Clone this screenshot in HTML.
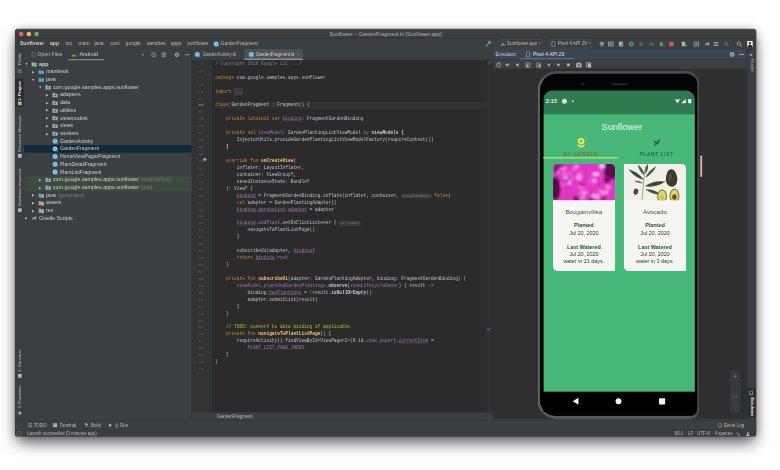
<!DOCTYPE html>
<html><head><meta charset="utf-8"><title>Sunflower – GardenFragment.kt</title>
<style>
*{box-sizing:border-box;margin:0;padding:0}
html,body{width:780px;height:470px;overflow:hidden;background:#fff}
body{font-family:"Liberation Sans",sans-serif;position:relative}
#win{position:absolute;left:15.3px;top:29.2px;width:1923px;height:1057px;transform:scale(0.3854);transform-origin:0 0;background:#3c3f41;border-radius:7px;box-shadow:0 20px 40px -5px rgba(0,0,0,.64),0 0 22px rgba(0,0,0,.2);color:#bbbbbb;font-size:13.6px;overflow:visible}
#clip{position:absolute;left:0;top:0;width:1923px;height:1057.5px;border-radius:7px;overflow:hidden}
#blur{position:absolute;left:0;top:0;width:1923px;height:1057.5px;filter:blur(1.1px)}
#in{position:absolute;left:0;top:1.5px;width:1923px;height:1056px}
.abs{position:absolute}
/* title */
#title{position:absolute;left:0;top:-1.5px;width:1923px;height:24.5px;padding-top:1.5px;box-shadow:inset 0 1.5px 0 #505254;background:linear-gradient(#3f4143,#393b3d);border-bottom:1px solid #303234;text-align:center;line-height:22px;font-size:13.6px;color:#b4b4b4}
.tl{position:absolute;top:6.5px;width:12px;height:12px;border-radius:50%}
/* nav */
#nav{position:absolute;left:0;top:23px;width:1923px;height:27px;background:#3c3f41;border-bottom:1px solid #38393b}
#nav .bc{position:absolute;top:-1px;line-height:27px;font-size:13px;color:#bbbbbb;white-space:nowrap}
#nav .bc.bd{font-weight:bold;color:#d0d0d0}
/* left strip */
#lstrip{position:absolute;left:0;top:50px;width:23.5px;height:964px;background:#3c3f41;border-right:1px solid #323232}
.vl{position:absolute;left:1.5px;width:21px;writing-mode:vertical-rl;transform:rotate(180deg);font-size:11.2px;line-height:21px;color:#bbbbbb;white-space:nowrap;text-align:left}
.vr{position:absolute;left:1.5px;width:21px;writing-mode:vertical-rl;font-size:11.2px;line-height:21px;color:#bbbbbb;white-space:nowrap}
/* project */
#proj{position:absolute;left:23.5px;top:50px;width:434.5px;height:964px;background:#3c3f41}
#proj .hd{position:absolute;left:0;top:0;width:436px;height:29px}
.tr{position:relative;height:20px;line-height:20px;font-size:13.8px;color:#cdcfd1;white-space:nowrap}
.tr.sel{background:#0d293e}
.tr.kt{font-size:13.3px}
.tr.tst{background:#3d4b40}
.tr .ar{position:absolute;top:0;font-size:9px;color:#c4c4c4;width:10px;text-align:center}
.tr .tic{position:absolute;top:2px;width:16px;height:16px}
.tr .tt{position:absolute;top:0}
.tr b{color:#d6d6d6}
.ti{width:16px;height:16px;display:block}
.gr{color:#787878}
/* editor */
#ed{position:absolute;left:459px;top:50px;width:781px;height:964px;background:#2b2b2b}
#tabs{position:absolute;left:0;top:0;width:782px;height:29px;background:#3c3f41;border-bottom:1px solid #323232}
#gut{position:absolute;left:0;top:29px;width:52px;height:913px;background:#313335;border-right:1px solid #3a3a3a}
.num{height:18px;line-height:18px;font-family:"Liberation Mono",monospace;font-size:10.5px;color:#606366;text-align:right;padding-right:22px}
.num.cur{color:#a4a3a3}
#code{position:absolute;left:60.5px;top:29px;width:708px;height:913px;overflow:hidden;font-family:"Liberation Mono",monospace;font-size:11.67px;color:#b7c2cc}
.ln{height:18px;line-height:18px;white-space:pre}
.ln.cur{background:#323232;margin-left:-6px;padding-left:6px}
.k{color:#d08234}.f{color:#ffc66d;font-weight:bold}.c{color:#808080}.p{color:#9876aa}.t{color:#a8c023}
.b{font-weight:bold;color:#c5d0da}.i{font-style:italic}.u{text-decoration:underline}
.h{color:#787878;background:#3b3b3b;font-size:9.6px;border-radius:3px;padding:1px 2px}
.fold{background:#3a3a3a;color:#808080;border:1px solid #555}
#edbc{position:absolute;left:0;top:942px;width:782px;height:22px;background:#3c3f41;border-top:1px solid #323232;font-size:12.2px;line-height:22px;color:#bbbbbb}
/* emulator */
#emu{position:absolute;left:1240px;top:50px;width:659px;height:960.5px;background:#2d2f31;border-left:1px solid #323232}
#emuhd{position:absolute;left:0;top:0;width:659px;height:27px;background:#3a4653}
#emutb{position:absolute;left:0;top:27px;width:659px;height:25px;background:#3c3f41;border-bottom:1px solid #323232}
/* right strip */
#rstrip{position:absolute;left:1899px;top:50px;width:24px;height:964px;background:#3c3f41;border-left:1px solid #323232}
/* bottom */
#bstrip{position:absolute;left:0;top:1014px;width:1923px;height:23px;background:#3c3f41;border-top:1px solid #323232;font-size:11.5px;line-height:24px}
#status{position:absolute;left:0;top:1037px;width:1923px;height:19px;background:#3a3d3f;border-top:1px solid #353739;font-size:11.6px;line-height:18px}
.bi{position:absolute;top:0;white-space:nowrap;color:#bbbbbb}
/* phone */
#phone{position:absolute;left:1355.5px;top:107.5px;width:420px;height:902.5px;background:#030404;border-radius:50px 34px 24px 48px;border-style:solid;border-color:#4a4c4f #40464a #55575a #606264;border-width:7px 6px 8px 6px}
#screen{position:absolute;left:1371.3px;top:157px;width:392.6px;height:834px;background:#000;border-radius:24px 24px 0 0;overflow:hidden;font-family:"Liberation Sans",sans-serif}
#sb{position:absolute;left:0;top:0;width:395px;height:62px;background:#2f7a4f}
#app{position:absolute;left:0;top:62px;width:395px;height:720.5px;background:#48b878}
#appin{position:absolute;left:-2.3px;top:2px;width:395px;height:718px}
.card{position:absolute;top:127px;width:161px;height:278px;background:#f5f6f2;border-radius:3px 12px 3px 12px;overflow:hidden;text-align:center;color:#3c3c3c}
.card .img{position:absolute;left:0;top:0;width:161px;height:95px;overflow:hidden}
.card .nm{position:absolute;left:0;width:161px;top:115px;font-size:16px;line-height:20px;color:#505050}
.card .lb{position:absolute;left:0;width:161px;font-size:14px;line-height:18px;font-weight:bold;color:#1f5a3a}
.card .vl2{position:absolute;left:0;width:161px;font-size:14px;line-height:18px;color:#383838}
</style></head>
<body>
<div id="win"><div id="clip"><div id="blur"><div id="in">
<!-- title bar -->
<div id="title">Sunflower – GardenFragment.kt [Sunflower.app]
<span class="tl" style="left:9.5px;background:#e0675d"></span><span class="tl" style="left:29.5px;background:#ecbd52"></span><span class="tl" style="left:49.5px;background:#5bb85a"></span>
</div>
<!-- nav bar -->
<div id="nav">
<span class="bc bd" style="left:13px">Sunflower</span>
<span class="bc bd" style="left:91px">app</span>
<span class="bc" style="left:131px">src</span>
<span class="bc" style="left:165px">main</span>
<span class="bc" style="left:206px">java</span>
<span class="bc" style="left:247px">com</span>
<span class="bc" style="left:287px">google</span>
<span class="bc" style="left:342px">samples</span>
<span class="bc" style="left:404px">apps</span>
<span class="bc" style="left:447px">sunflower</span>
<svg class="abs" style="left:513.5px;top:6px;width:16px;height:16px" viewBox="0 0 16 16"><circle cx="8" cy="8" r="7" fill="#4f9fc6"/><circle cx="8" cy="8" r="3.8" fill="none" stroke="#e4f2f9" stroke-width="1.7"/><path d="M16 16h-4l4-4z" fill="#c98a5a"/></svg>
<span class="bc" style="left:533.5px;font-size:12.7px">GardenFragment</span>
<!-- run toolbar -->
<svg class="abs" style="left:1220px;top:5px;width:17px;height:17px" viewBox="0 0 16 16"><path d="M1 13l7-7-1-3 4-3 1 3 3 1-3 4-3-1-6 8z" fill="#5fae6e" stroke="#5fae6e" stroke-width="1"/></svg>
<div class="abs" style="left:1254px;top:2px;width:116px;height:23px;border:1px solid #5a5d5f;border-radius:3px;background:#3c3f41"></div>
<svg class="abs" style="left:1259px;top:7px;width:14px;height:14px" viewBox="0 0 16 16"><path d="M2 12a6 6 0 0 1 12 0z" fill="#62b543"/></svg>
<span class="bc" style="left:1276px;font-size:12.5px">Sunflower.app</span>
<span class="bc" style="left:1358px;font-size:8px;color:#9a9a9a">&#9660;</span>
<div class="abs" style="left:1386px;top:2px;width:110px;height:23px;border:1px solid #5a5d5f;border-radius:3px;background:#3c3f41"></div>
<svg class="abs" style="left:1390px;top:6px;width:14px;height:16px" viewBox="0 0 14 16"><rect x="3" y="1" width="8" height="14" rx="1.5" fill="none" stroke="#afb1b3" stroke-width="1.5"/></svg>
<span class="bc" style="left:1408px;font-size:12.2px">Pixel 4 API 29</span>
<span class="bc" style="left:1486px;font-size:8px;color:#9a9a9a">&#9660;</span>
<svg class="abs" style="left:1514px;top:6px;width:16px;height:16px" viewBox="0 0 16 16"><path d="M3 8a5 5 0 0 1 9-3l1.5-1.5V8H9l1.7-1.7A3.2 3.2 0 0 0 5 8zM13 9a5 5 0 0 1-9 2" fill="none" stroke="#afb1b3" stroke-width="1.8"/><rect x="6" y="6" width="4" height="4" fill="#afb1b3"/></svg><svg class="abs" style="left:1538px;top:6px;width:16px;height:16px" viewBox="0 0 16 16"><rect x="2" y="3" width="12" height="10" fill="none" stroke="#afb1b3" stroke-width="1.8"/><path d="M2 8h12M8 3v10" stroke="#afb1b3" stroke-width="1.4"/></svg><svg class="abs" style="left:1564px;top:6px;width:16px;height:16px" viewBox="0 0 16 16"><rect x="3" y="2" width="10" height="12" fill="#afb1b3"/><rect x="8" y="8" width="7" height="7" fill="#6e7f8a"/></svg><svg class="abs" style="left:1591px;top:6px;width:16px;height:16px" viewBox="0 0 16 16"><circle cx="8" cy="8" r="6.5" fill="#4f9e62"/><path d="M6 4.5v7l6-3.5z" fill="#3c3f41"/></svg><svg class="abs" style="left:1617px;top:6px;width:16px;height:16px" viewBox="0 0 16 16"><ellipse cx="8" cy="9" rx="4.5" ry="5.5" fill="#4a6b52"/><path d="M2 5l3 2M14 5l-3 2M1 10h3M15 10h-3" stroke="#4a6b52" stroke-width="1.5"/></svg><svg class="abs" style="left:1643px;top:6px;width:16px;height:16px" viewBox="0 0 16 16"><path d="M2 12a6 6 0 0 1 12 0" fill="none" stroke="#7d8184" stroke-width="2"/><path d="M8 12l4-5" stroke="#7d8184" stroke-width="2"/></svg><svg class="abs" style="left:1670px;top:6px;width:16px;height:16px" viewBox="0 0 16 16"><ellipse cx="7" cy="8" rx="4.5" ry="5.5" fill="#4f9e62"/><path d="M9 9l6 6v-4h-4z" fill="#afb1b3"/></svg><svg class="abs" style="left:1695px;top:6px;width:16px;height:16px" viewBox="0 0 16 16"><rect x="2" y="2" width="12" height="12" rx="2" fill="#d6544f"/></svg><svg class="abs" style="left:1728px;top:6px;width:16px;height:16px" viewBox="0 0 16 16"><rect x="2" y="2" width="9" height="12" rx="1" fill="#afb1b3"/><path d="M7 14a4.5 4.5 0 0 1 9 0z" fill="#62b543"/></svg><svg class="abs" style="left:1760px;top:6px;width:16px;height:16px" viewBox="0 0 16 16"><rect x="2" y="3" width="12" height="10" fill="none" stroke="#afb1b3" stroke-width="1.8"/><path d="M8 5v5M5.5 8L8 10.5 10.5 8" stroke="#afb1b3" stroke-width="1.6" fill="none"/></svg><svg class="abs" style="left:1789px;top:6px;width:16px;height:16px" viewBox="0 0 16 16"><path d="M1 12c0-5 4-8 8-7l3-2 1 2-2 2c1 2 1 4 0 5h-2c0-2-1-3-3-3s-3 1-3 3z" fill="#8fb0c4"/></svg><svg class="abs" style="left:1811px;top:6px;width:16px;height:16px" viewBox="0 0 16 16"><path d="M2 4h12M2 8h12M2 12h12" stroke="#afb1b3" stroke-width="2"/></svg><svg class="abs" style="left:1838px;top:6px;width:16px;height:16px" viewBox="0 0 16 16"><circle cx="6.5" cy="6.5" r="4" fill="none" stroke="#8a8d90" stroke-width="1.8"/><path d="M9.5 9.5L14 14" stroke="#8a8d90" stroke-width="2"/></svg><svg class="abs" style="left:1871px;top:6px;width:16px;height:16px" viewBox="0 0 16 16"><circle cx="7" cy="7" r="4.5" fill="none" stroke="#c0c2c4" stroke-width="1.8"/><path d="M10.2 10.2L15 15" stroke="#c0c2c4" stroke-width="2"/></svg><svg class="abs" style="left:1899px;top:6px;width:16px;height:16px" viewBox="0 0 16 16"><rect x="1" y="0" width="14" height="16" rx="1" fill="#f4f4f4"/><circle cx="8" cy="6" r="3" fill="#222"/><path d="M2 16a6 6 0 0 1 12 0z" fill="#222"/></svg>
</div>
<!-- left strip -->
<div id="lstrip">
<div class="abs" style="left:0;top:77px;width:23px;height:73px;background:#2d2f30"></div>
<div class="vl" style="top:10px;height:32px;">Profile</div>
<svg class="abs" style="left:6.5px;top:52px;width:11px;height:11px" viewBox="0 0 12 12"><path d="M0 2h12M0 6h12M0 10h12" stroke="#9a9da0" stroke-width="1.6"/></svg>
<div class="vl" style="top:83px;height:52px;color:#f0f0f0;font-weight:bold">1: Project</div>
<svg class="abs" style="left:6.5px;top:136px;width:11px;height:11px" viewBox="0 0 12 12"><rect x="1" y="1" width="10" height="10" fill="#afb1b3"/><rect x="1" y="1" width="10" height="3" fill="#d0d2d4"/></svg>
<div class="vl" style="top:172px;height:95px;">Resource Manager</div>
<svg class="abs" style="left:6.5px;top:272px;width:11px;height:11px" viewBox="0 0 12 12"><rect x="1" y="1" width="10" height="10" fill="#afb1b3"/><rect x="1" y="1" width="10" height="3" fill="#d0d2d4"/></svg>
<div class="vl" style="top:310px;height:97px;">Database Inspector</div>
<svg class="abs" style="left:6.5px;top:413px;width:11px;height:11px" viewBox="0 0 12 12"><rect x="1" y="1" width="10" height="10" fill="#afb1b3"/><rect x="1" y="1" width="10" height="3" fill="#d0d2d4"/></svg>
<div class="vl" style="top:769px;height:69px;">2: Structure</div>
<svg class="abs" style="left:6.5px;top:843px;width:11px;height:11px" viewBox="0 0 12 12"><rect x="1" y="1" width="10" height="10" fill="#afb1b3"/><rect x="1" y="1" width="10" height="3" fill="#d0d2d4"/></svg>
<div class="vl" style="top:875px;height:57px;">2: Favorites</div>
<svg class="abs" style="left:6.5px;top:939px;width:11px;height:11px" viewBox="0 0 12 12"><path d="M6 0l1.8 4 4.2.4-3.2 2.9 1 4.3L6 9.4 2.2 11.6l1-4.3L0 4.4 4.2 4z" fill="#afb1b3"/></svg>
</div>
<!-- project panel -->
<div id="proj">
<div class="hd">
<svg class="abs" style="left:18px;top:8px;width:12px;height:14px" viewBox="0 0 14 16"><path d="M2 1h7l3 3v11H2z" fill="none" stroke="#9a9da0" stroke-width="1.4"/></svg>
<span class="abs" style="left:35px;top:0;line-height:29px;font-size:13.3px;color:#bbbbbb">Open Files</span>
<svg class="abs" style="left:122px;top:10px;width:13px;height:11px" viewBox="0 0 16 14"><path d="M1 12a7 7 0 0 1 14 0z" fill="#62b543"/></svg>
<span class="abs" style="left:144px;top:0;line-height:29px;font-size:13.8px;color:#d0d0d0">Android</span>
<div class="abs" style="left:114px;top:26px;width:93px;height:3px;background:#8a8d90"></div>
<span class="abs" style="left:304px;top:0;line-height:29px;font-size:9px;color:#9a9a9a">&#9660;</span>
<svg class="abs" style="left:328px;top:7px;width:16px;height:16px" viewBox="0 0 16 16"><circle cx="8" cy="8" r="5.5" fill="none" stroke="#afb1b3" stroke-width="1.5"/><circle cx="8" cy="8" r="1.6" fill="#afb1b3"/></svg>
<svg class="abs" style="left:354px;top:7px;width:16px;height:16px" viewBox="0 0 16 16"><path d="M2 4h12M2 8h12M2 12h12" stroke="#afb1b3" stroke-width="1.5"/><path d="M8 1v14" stroke="#afb1b3" stroke-width="1.5"/></svg>
<svg class="abs" style="left:388px;top:7px;width:16px;height:16px" viewBox="0 0 16 16"><circle cx="8" cy="8" r="4.5" fill="none" stroke="#afb1b3" stroke-width="3" stroke-dasharray="2.4 1.1"/><circle cx="8" cy="8" r="3.2" fill="none" stroke="#afb1b3" stroke-width="1.6"/></svg>
<div class="abs" style="left:417px;top:14px;width:12px;height:2px;background:#afb1b3"></div>
</div>
<div class="abs" style="left:0;top:29.4px;width:434.5px">
<div class="tr "><span class="ar" style="left:1px">&#9660;</span><span class="tic" style="left:18px"><svg class="ti" viewBox="0 0 16 16"><path d="M1 3h5l2 2h7v9H1z" fill="#9aa7b0"/><circle cx="11.5" cy="11.5" r="3.5" fill="#62b543"/></svg></span><span class="tt" style="left:39px"><b>app</b></span></div>
<div class="tr "><span class="ar" style="left:20px">&#9654;</span><span class="tic" style="left:36px"><svg class="ti" viewBox="0 0 16 16"><path d="M1 3h5l2 2h7v9H1z" fill="#3e86a0"/><path d="M1 6h14v8H1z" fill="#4fa3c4"/></svg></span><span class="tt" style="left:57px">manifests</span></div>
<div class="tr "><span class="ar" style="left:19px">&#9660;</span><span class="tic" style="left:36px"><svg class="ti" viewBox="0 0 16 16"><path d="M1 3h5l2 2h7v9H1z" fill="#3e86a0"/><path d="M1 6h14v8H1z" fill="#4fa3c4"/></svg></span><span class="tt" style="left:57px">java</span></div>
<div class="tr "><span class="ar" style="left:37px">&#9660;</span><span class="tic" style="left:54px"><svg class="ti" viewBox="0 0 16 16"><path d="M1 3h5l2 2h7v9H1z" fill="#9aa7b0"/><circle cx="8" cy="9.5" r="2" fill="#3c3f41"/></svg></span><span class="tt" style="left:75px">com.google.samples.apps.sunflower</span></div>
<div class="tr "><span class="ar" style="left:56px">&#9654;</span><span class="tic" style="left:72px"><svg class="ti" viewBox="0 0 16 16"><path d="M1 3h5l2 2h7v9H1z" fill="#9aa7b0"/><circle cx="8" cy="9.5" r="2" fill="#3c3f41"/></svg></span><span class="tt" style="left:93px">adapters</span></div>
<div class="tr "><span class="ar" style="left:56px">&#9654;</span><span class="tic" style="left:72px"><svg class="ti" viewBox="0 0 16 16"><path d="M1 3h5l2 2h7v9H1z" fill="#9aa7b0"/><circle cx="8" cy="9.5" r="2" fill="#3c3f41"/></svg></span><span class="tt" style="left:93px">data</span></div>
<div class="tr "><span class="ar" style="left:56px">&#9654;</span><span class="tic" style="left:72px"><svg class="ti" viewBox="0 0 16 16"><path d="M1 3h5l2 2h7v9H1z" fill="#9aa7b0"/><circle cx="8" cy="9.5" r="2" fill="#3c3f41"/></svg></span><span class="tt" style="left:93px">utilities</span></div>
<div class="tr "><span class="ar" style="left:56px">&#9654;</span><span class="tic" style="left:72px"><svg class="ti" viewBox="0 0 16 16"><path d="M1 3h5l2 2h7v9H1z" fill="#9aa7b0"/><circle cx="8" cy="9.5" r="2" fill="#3c3f41"/></svg></span><span class="tt" style="left:93px">viewmodels</span></div>
<div class="tr "><span class="ar" style="left:56px">&#9654;</span><span class="tic" style="left:72px"><svg class="ti" viewBox="0 0 16 16"><path d="M1 3h5l2 2h7v9H1z" fill="#9aa7b0"/><circle cx="8" cy="9.5" r="2" fill="#3c3f41"/></svg></span><span class="tt" style="left:93px">views</span></div>
<div class="tr "><span class="ar" style="left:56px">&#9654;</span><span class="tic" style="left:72px"><svg class="ti" viewBox="0 0 16 16"><path d="M1 3h5l2 2h7v9H1z" fill="#9aa7b0"/><circle cx="8" cy="9.5" r="2" fill="#3c3f41"/></svg></span><span class="tt" style="left:93px">workers</span></div>
<div class="tr kt"><span class="tic" style="left:72px"><svg class="ti" viewBox="0 0 16 16"><circle cx="8" cy="8" r="7" fill="#4f9fc6"/><circle cx="8" cy="8" r="3.8" fill="none" stroke="#e4f2f9" stroke-width="1.7"/><path d="M16 16h-4l4-4z" fill="#c98a5a"/></svg></span><span class="tt" style="left:93px">GardenActivity</span></div>
<div class="tr sel kt"><span class="tic" style="left:72px"><svg class="ti" viewBox="0 0 16 16"><circle cx="8" cy="8" r="7" fill="#4f9fc6"/><circle cx="8" cy="8" r="3.8" fill="none" stroke="#e4f2f9" stroke-width="1.7"/><path d="M16 16h-4l4-4z" fill="#c98a5a"/></svg></span><span class="tt" style="left:93px">GardenFragment</span></div>
<div class="tr kt"><span class="tic" style="left:72px"><svg class="ti" viewBox="0 0 16 16"><circle cx="8" cy="8" r="7" fill="#4f9fc6"/><circle cx="8" cy="8" r="3.8" fill="none" stroke="#e4f2f9" stroke-width="1.7"/><path d="M16 16h-4l4-4z" fill="#c98a5a"/></svg></span><span class="tt" style="left:93px">HomeViewPagerFragment</span></div>
<div class="tr kt"><span class="tic" style="left:72px"><svg class="ti" viewBox="0 0 16 16"><circle cx="8" cy="8" r="7" fill="#4f9fc6"/><circle cx="8" cy="8" r="3.8" fill="none" stroke="#e4f2f9" stroke-width="1.7"/><path d="M16 16h-4l4-4z" fill="#c98a5a"/></svg></span><span class="tt" style="left:93px">PlantDetailFragment</span></div>
<div class="tr kt"><span class="tic" style="left:72px"><svg class="ti" viewBox="0 0 16 16"><circle cx="8" cy="8" r="7" fill="#4f9fc6"/><circle cx="8" cy="8" r="3.8" fill="none" stroke="#e4f2f9" stroke-width="1.7"/><path d="M16 16h-4l4-4z" fill="#c98a5a"/></svg></span><span class="tt" style="left:93px">PlantListFragment</span></div>
<div class="tr tst"><span class="ar" style="left:38px">&#9654;</span><span class="tic" style="left:54px"><svg class="ti" viewBox="0 0 16 16"><path d="M1 3h5l2 2h7v9H1z" fill="#9aa7b0"/><circle cx="8" cy="9.5" r="2" fill="#3c3f41"/></svg></span><span class="tt" style="left:75px">com.google.samples.apps.sunflower <span class="gr">(androidTest)</span></span></div>
<div class="tr tst"><span class="ar" style="left:38px">&#9654;</span><span class="tic" style="left:54px"><svg class="ti" viewBox="0 0 16 16"><path d="M1 3h5l2 2h7v9H1z" fill="#9aa7b0"/><circle cx="8" cy="9.5" r="2" fill="#3c3f41"/></svg></span><span class="tt" style="left:75px">com.google.samples.apps.sunflower <span class="gr">(test)</span></span></div>
<div class="tr "><span class="ar" style="left:20px">&#9654;</span><span class="tic" style="left:36px"><svg class="ti" viewBox="0 0 16 16"><path d="M1 3h5l2 2h7v9H1z" fill="#4fa3c4"/><circle cx="11.5" cy="11.5" r="3.5" fill="#cfa35a"/></svg></span><span class="tt" style="left:57px">java <span class="gr">(generated)</span></span></div>
<div class="tr "><span class="ar" style="left:20px">&#9654;</span><span class="tic" style="left:36px"><svg class="ti" viewBox="0 0 16 16"><path d="M1 3h5l2 2h7v9H1z" fill="#9aa7b0"/><path d="M8 8h7v7H8z" fill="#cfa35a"/></svg></span><span class="tt" style="left:57px">assets</span></div>
<div class="tr "><span class="ar" style="left:20px">&#9654;</span><span class="tic" style="left:36px"><svg class="ti" viewBox="0 0 16 16"><path d="M1 3h5l2 2h7v9H1z" fill="#9aa7b0"/><path d="M8 8h7v7H8z" fill="#cfa35a"/></svg></span><span class="tt" style="left:57px">res</span></div>
<div class="tr "><span class="ar" style="left:2px">&#9654;</span><span class="tic" style="left:18px"><svg class="ti" viewBox="0 0 16 16"><path d="M2 12c0-5 4-8 8-7l3-2 1 2-2 2c1 2 1 4 0 5h-2c0-2-1-3-3-3s-3 1-3 3z" fill="#afb1b3"/></svg></span><span class="tt" style="left:39px">Gradle Scripts</span></div>

</div>
</div>
<!-- editor -->
<div id="ed">
<div id="tabs">
<svg class="abs" style="left:6px;top:6px;width:16px;height:16px" viewBox="0 0 16 16"><circle cx="8" cy="8" r="7" fill="#4f9fc6"/><circle cx="8" cy="8" r="3.8" fill="none" stroke="#e4f2f9" stroke-width="1.7"/><path d="M16 16h-4l4-4z" fill="#c98a5a"/></svg>
<span class="abs" style="left:28px;top:0;line-height:28px;font-size:11.6px;color:#bbbbbb">GardenActivity.kt</span>
<div class="abs" style="left:136px;top:0;width:152px;height:28px;background:#4e5254;border-bottom:3px solid #9da0a2"></div>
<svg class="abs" style="left:146px;top:6px;width:16px;height:16px" viewBox="0 0 16 16"><circle cx="8" cy="8" r="7" fill="#4f9fc6"/><circle cx="8" cy="8" r="3.8" fill="none" stroke="#e4f2f9" stroke-width="1.7"/><path d="M16 16h-4l4-4z" fill="#c98a5a"/></svg>
<span class="abs" style="left:166px;top:0;line-height:28px;font-size:11.6px;color:#d4d4d4">GardenFragment.kt</span>
<span class="abs" style="left:273px;top:0;line-height:27px;font-size:12px;color:#8a8a8a">×</span>
</div>
<div id="gut">
<div class="num">1</div>
<div class="num">16</div>
<div class="num">17</div>
<div class="num">18</div>
<div class="num">19</div>
<div class="num">32</div>
<div class="num cur">33</div>
<div class="num">34</div>
<div class="num">35</div>
<div class="num">36</div>
<div class="num">37</div>
<div class="num">38</div>
<div class="num">39</div>
<div class="num">40</div>
<div class="num">41</div>
<div class="num">42</div>
<div class="num">43</div>
<div class="num">44</div>
<div class="num">45</div>
<div class="num">46</div>
<div class="num">47</div>
<div class="num">48</div>
<div class="num">49</div>
<div class="num">50</div>
<div class="num">51</div>
<div class="num">52</div>
<div class="num">53</div>
<div class="num">54</div>
<div class="num">55</div>
<div class="num">56</div>
<div class="num">57</div>
<div class="num">58</div>
<div class="num">59</div>
<div class="num">60</div>
<div class="num">61</div>
<div class="num">62</div>
<div class="num">63</div>
<div class="num">64</div>
<div class="num">65</div>
<div class="num">66</div>
<div class="num">67</div>
<div class="num">68</div>
<div class="num">69</div>
<div class="num">70</div>
<div class="num">71</div>

</div>
<svg class="abs" style="left:28px;top:281px;width:11px;height:11px" viewBox="0 0 12 12"><circle cx="6" cy="6" r="5" fill="#5f8aa3"/><path d="M6 9V3.5M3.5 6L6 3.5 8.5 6" stroke="#e8eef2" stroke-width="1.4" fill="none"/></svg>
<div id="code">
<div class="ln"><span class="c">/ Copyright 2018 Google LLC .../</span></div>
<div class="ln">&nbsp;</div>
<div class="ln"><span class="k">package</span> com.google.samples.apps.sunflower</div>
<div class="ln">&nbsp;</div>
<div class="ln"><span class="k">import</span> <span class="fold">...</span></div>
<div class="ln">&nbsp;</div>
<div class="ln cur"><span class="k">class</span> GardenFragment : Fragment() {</div>
<div class="ln">&nbsp;</div>
<div class="ln">    <span class="k">private lateinit var</span> <span class="p u">binding</span>: FragmentGardenBinding</div>
<div class="ln">&nbsp;</div>
<div class="ln">    <span class="k">private val</span> <span class="p">viewModel</span>: GardenPlantingListViewModel <span class="k">by</span> <span class="b">viewModels {</span></div>
<div class="ln">        InjectorUtils.provideGardenPlantingListViewModelFactory(requireContext())</div>
<div class="ln">    <span class="b">}</span></div>
<div class="ln">&nbsp;</div>
<div class="ln">    <span class="k">override fun</span> <span class="f">onCreateView</span>(</div>
<div class="ln">        inflater: LayoutInflater,</div>
<div class="ln">        container: ViewGroup?,</div>
<div class="ln">        savedInstanceState: Bundle?</div>
<div class="ln">    ): View? {</div>
<div class="ln">        <span class="p u">binding</span> = FragmentGardenBinding.inflate(inflater, container, <span class="h">attachToRoot:</span> <span class="k">false</span>)</div>
<div class="ln">        <span class="k">val</span> adapter = GardenPlantingAdapter()</div>
<div class="ln">        <span class="p u">binding</span>.<span class="p u">gardenList</span>.<span class="p u">adapter</span> = adapter</div>
<div class="ln">&nbsp;</div>
<div class="ln">        <span class="p u">binding</span>.<span class="p">addPlant</span>.setOnClickListener { <span class="h">it: View!</span></div>
<div class="ln">            navigateToPlantListPage()</div>
<div class="ln">        }</div>
<div class="ln">&nbsp;</div>
<div class="ln">        subscribeUi(adapter, <span class="p u">binding</span>)</div>
<div class="ln">        <span class="k">return</span> <span class="p u">binding</span>.<span class="p">root</span></div>
<div class="ln">    }</div>
<div class="ln">&nbsp;</div>
<div class="ln">    <span class="k">private fun</span> <span class="f">subscribeUi</span>(adapter: GardenPlantingAdapter, binding: FragmentGardenBinding) {</div>
<div class="ln">        <span class="p">viewModel</span>.<span class="p">plantAndGardenPlantings</span>.<span class="b">observe</span>(<span class="p">viewLifecycleOwner</span>) { result -&gt;</div>
<div class="ln">            binding.<span class="p u">hasPlantings</span> = !result.<span class="b i">isNullOrEmpty</span>()</div>
<div class="ln">            adapter.submitList(result)</div>
<div class="ln">        }</div>
<div class="ln">    }</div>
<div class="ln">&nbsp;</div>
<div class="ln">    <span class="t">// TODO: convert to data binding if applicable</span></div>
<div class="ln">    <span class="k">private fun</span> <span class="f">navigateToPlantListPage</span>() {</div>
<div class="ln">        requireActivity().findViewById&lt;ViewPager2&gt;(R.id.<span class="p i">view_pager</span>).<span class="p u">currentItem</span> =</div>
<div class="ln">            <span class="p i">PLANT_LIST_PAGE_INDEX</span></div>
<div class="ln">    }</div>
<div class="ln">}</div>
<div class="ln">&nbsp;</div>

</div>
<div class="abs" style="left:765px;top:29px;width:16px;height:935px;background:#2e3032"></div><svg class="abs" style="left:766px;top:27px;width:14px;height:14px" viewBox="0 0 14 14"><path d="M2 8l3 3 7-8" stroke="#6a9b4d" stroke-width="2.4" fill="none"/></svg>
<svg class="abs" style="left:762px;top:722px;width:12px;height:10px" viewBox="0 0 12 10"><path d="M11 1v8L1 5z" fill="#4d6c7c"/></svg>
<div id="edbc"><span class="abs" style="left:65px">GardenFragment</span></div>
</div>
<!-- emulator -->
<div id="emu">
<div id="emuhd">
<span class="abs" style="left:6px;top:0;line-height:27px;font-size:13px;color:#c8ccd0">Emulator:</span>
<svg class="abs" style="left:84px;top:6px;width:12px;height:16px" viewBox="0 0 12 16"><rect x="2" y="1" width="8" height="14" rx="1.5" fill="none" stroke="#c0c4c8" stroke-width="1.4"/></svg>
<span class="abs" style="left:103px;top:0;line-height:27px;font-size:13px;color:#e0e3e6">Pixel 4 API 29</span>
<div class="abs" style="left:70px;top:24px;width:142px;height:3px;background:#4a88c7"></div>
<svg class="abs" style="left:612px;top:6px;width:16px;height:16px" viewBox="0 0 16 16"><circle cx="8" cy="8" r="4.5" fill="none" stroke="#c8ccd0" stroke-width="3" stroke-dasharray="2.4 1.1"/><circle cx="8" cy="8" r="3.2" fill="none" stroke="#c8ccd0" stroke-width="1.6"/></svg>
<div class="abs" style="left:638px;top:13px;width:12px;height:2px;background:#c8ccd0"></div>
</div>
<div id="emutb"><svg class="abs" style="left:6px;top:6px;width:16px;height:16px" viewBox="0 0 16 16"><circle cx="8" cy="8" r="5.5" fill="none" stroke="#afb1b3" stroke-width="1.8"/><path d="M8 2v6" stroke="#afb1b3" stroke-width="1.8"/></svg><svg class="abs" style="left:30px;top:6px;width:16px;height:16px" viewBox="0 0 16 16"><path d="M2 6h3l4-3v10l-4-3H2z" fill="#afb1b3"/><path d="M11 5a4 4 0 0 1 0 6" stroke="#afb1b3" stroke-width="1.5" fill="none"/></svg><svg class="abs" style="left:56px;top:6px;width:16px;height:16px" viewBox="0 0 16 16"><path d="M3 6h3l4-3v10l-4-3H3z" fill="#afb1b3"/></svg><svg class="abs" style="left:82px;top:6px;width:16px;height:16px" viewBox="0 0 16 16"><rect x="3" y="3" width="10" height="11" fill="none" stroke="#afb1b3" stroke-width="1.6"/><rect x="4" y="7" width="5" height="6" fill="#afb1b3"/></svg><svg class="abs" style="left:110px;top:6px;width:16px;height:16px" viewBox="0 0 16 16"><rect x="3" y="3" width="10" height="11" fill="none" stroke="#afb1b3" stroke-width="1.6"/><rect x="7" y="7" width="5" height="6" fill="#afb1b3"/></svg><svg class="abs" style="left:136px;top:6px;width:16px;height:16px" viewBox="0 0 16 16"><path d="M11 4v8L4 8z" fill="#afb1b3"/></svg><svg class="abs" style="left:161px;top:6px;width:16px;height:16px" viewBox="0 0 16 16"><circle cx="8" cy="8" r="3.6" fill="#afb1b3"/></svg><svg class="abs" style="left:187px;top:6px;width:16px;height:16px" viewBox="0 0 16 16"><rect x="4.5" y="4.5" width="7" height="7" fill="#afb1b3"/></svg><svg class="abs" style="left:214px;top:6px;width:16px;height:16px" viewBox="0 0 16 16"><path d="M1 4h3l1-2h6l1 2h3v10H1z" fill="#afb1b3"/><circle cx="8" cy="9" r="2.6" fill="#3c3f41"/></svg><svg class="abs" style="left:240px;top:6px;width:16px;height:16px" viewBox="0 0 16 16"><rect x="2" y="1" width="9" height="11" fill="none" stroke="#afb1b3" stroke-width="1.5"/><rect x="5" y="4" width="9" height="11" fill="#afb1b3"/></svg></div>
</div>
<!-- phone (window coords) -->
<div id="phone"></div>
<div class="abs" style="left:1778px;top:326px;width:5px;height:56px;background:#e8a79a;border-radius:2px"></div>
<div class="abs" style="left:1548px;top:139px;width:42px;height:5px;border-radius:3px;background:#222426"></div><div class="abs" style="left:1468px;top:136px;width:11px;height:11px;border-radius:50%;background:#16181a"></div>
<div id="screen">
<div id="sb">
<span class="abs" style="left:6px;top:20px;font-size:14.5px;line-height:16px;color:#e8f3ec;font-weight:bold">2:15</span>
<span class="abs" style="left:48px;top:22px;width:13px;height:13px;border-radius:50%;background:#d5e8dc"></span>
<span class="abs" style="left:74px;top:26px;width:5px;height:5px;border-radius:50%;background:#d5e8dc"></span>
<svg class="abs" style="left:341px;top:21.5px;width:46px;height:14.4px" viewBox="0 0 48 15"><path d="M0.5 3h13.6l-6.8 10.5z" fill="#fff"/><path d="M17.5 13.5l12-12v12z" fill="#fff"/><rect x="36.5" y="1.5" width="8" height="12" rx="1" fill="#fff"/></svg>
</div>
<div id="app"><div id="appin">
<div class="abs" style="left:0;top:14px;width:395px;text-align:center;font-size:23.6px;line-height:32px;color:#e9f6ee;padding-left:16px">Sunflower</div>
<!-- tabs -->
<svg class="abs" style="left:87px;top:58px;width:26px;height:28px" viewBox="0 0 26 28"><circle cx="13" cy="10" r="8.5" fill="#f1e84e"/><circle cx="13" cy="10" r="3.2" fill="#48b878"/><path d="M3 19c2 6 7 8 10 8s8-2 10-8c-3 0-7 1-10 5-3-4-7-5-10-5z" fill="#f1e84e"/></svg>
<svg class="abs" style="left:284px;top:58px;width:26px;height:28px" viewBox="0 0 26 28"><path d="M4 26c2-9 8-16 18-22-2 10-8 16-14 18z" fill="#256b45"/><path d="M3 8c5 0 9 3 10 8-5 0-9-3-10-8z" fill="#256b45"/></svg>
<div class="abs" style="left:0;top:95px;width:197px;text-align:center;font-size:12px;line-height:16px;font-weight:bold;letter-spacing:1.9px;color:#5f7f2c">MY GARDEN</div>
<div class="abs" style="left:197px;top:95px;width:198px;text-align:center;font-size:12px;line-height:16px;font-weight:bold;letter-spacing:1.9px;color:#246c45">PLANT LIST</div>
<div class="abs" style="left:0;top:109.5px;width:197px;height:4px;background:#a6dc72"></div>
<!-- cards -->
<div class="card" style="left:26.5px">
<div class="img"><svg width="161" height="95" viewBox="0 0 161 95"><defs><filter id="bl" x="-10%" y="-10%" width="120%" height="120%"><feGaussianBlur stdDeviation="2.2"/></filter></defs><rect width="161" height="95" fill="#e138c4"/><g filter="url(#bl)"><ellipse cx="150" cy="16" rx="18" ry="24" fill="#5a1050"/><ellipse cx="140" cy="40" rx="8" ry="10" fill="#7a1868"/><ellipse cx="6" cy="64" rx="13" ry="30" fill="#520c44"/><ellipse cx="18" cy="8" rx="14" ry="8" fill="#8a2078"/><ellipse cx="76" cy="58" rx="8" ry="7" fill="#6a1258"/><ellipse cx="62" cy="90" rx="9" ry="6" fill="#6a1258"/><ellipse cx="128" cy="88" rx="10" ry="5" fill="#8a1c74"/><ellipse cx="40" cy="36" rx="5" ry="5" fill="#8a1c74"/><ellipse cx="100" cy="92" rx="7" ry="4" fill="#7a1868"/><ellipse cx="10" cy="14" rx="8" ry="10" fill="#7a1868"/><ellipse cx="55" cy="14" rx="7.3" ry="4.6" fill="#f066d6"/><ellipse cx="61" cy="6" rx="6.5" ry="4.0" fill="#fabcf0"/><ellipse cx="69" cy="23" rx="6.8" ry="4.2" fill="#f066d6"/><ellipse cx="143" cy="60" rx="6.9" ry="4.3" fill="#fabcf0"/><ellipse cx="17" cy="21" rx="6.8" ry="4.4" fill="#fabcf0"/><ellipse cx="30" cy="11" rx="5.5" ry="5.1" fill="#f486e0"/><ellipse cx="24" cy="54" rx="4.9" ry="3.2" fill="#f066d6"/><ellipse cx="89" cy="59" rx="6.5" ry="5.3" fill="#d52fb8"/><ellipse cx="75" cy="88" rx="5.8" ry="4.1" fill="#f486e0"/><ellipse cx="108" cy="23" rx="6.9" ry="5.6" fill="#d52fb8"/><ellipse cx="112" cy="27" rx="8.9" ry="5.8" fill="#fabcf0"/><ellipse cx="33" cy="32" rx="8.7" ry="6.7" fill="#f066d6"/><ellipse cx="117" cy="54" rx="8.4" ry="6.1" fill="#d52fb8"/><ellipse cx="93" cy="55" rx="6.3" ry="5.9" fill="#e640c8"/><ellipse cx="76" cy="63" rx="4.3" ry="3.8" fill="#ee5ad2"/><ellipse cx="50" cy="37" rx="7.3" ry="4.5" fill="#ee5ad2"/><ellipse cx="60" cy="58" rx="6.5" ry="4.4" fill="#e640c8"/><ellipse cx="28" cy="24" rx="6.0" ry="5.6" fill="#f066d6"/><ellipse cx="33" cy="38" rx="5.4" ry="3.5" fill="#fabcf0"/><ellipse cx="68" cy="34" rx="8.4" ry="8.3" fill="#f486e0"/><ellipse cx="22" cy="14" rx="7.3" ry="4.4" fill="#f486e0"/><ellipse cx="47" cy="0" rx="6.1" ry="4.6" fill="#d52fb8"/><ellipse cx="143" cy="66" rx="6.6" ry="5.6" fill="#ec4ccf"/><ellipse cx="74" cy="83" rx="8.8" ry="7.6" fill="#fabcf0"/><ellipse cx="66" cy="37" rx="6.4" ry="4.9" fill="#f7a2e8"/><ellipse cx="19" cy="20" rx="4.8" ry="3.5" fill="#ec4ccf"/><ellipse cx="24" cy="54" rx="6.7" ry="6.5" fill="#ec4ccf"/><ellipse cx="20" cy="20" rx="5.9" ry="5.0" fill="#d52fb8"/><ellipse cx="94" cy="45" rx="4.6" ry="3.6" fill="#ee5ad2"/><ellipse cx="77" cy="30" rx="4.7" ry="4.2" fill="#e640c8"/><ellipse cx="77" cy="66" rx="6.6" ry="4.5" fill="#d52fb8"/><ellipse cx="31" cy="52" rx="4.1" ry="3.4" fill="#f066d6"/><ellipse cx="107" cy="25" rx="5.8" ry="3.9" fill="#f7a2e8"/><ellipse cx="85" cy="74" rx="5.6" ry="3.9" fill="#f7a2e8"/><ellipse cx="123" cy="78" rx="7.7" ry="5.3" fill="#ee5ad2"/><ellipse cx="60" cy="3" rx="4.1" ry="2.9" fill="#e640c8"/><ellipse cx="37" cy="57" rx="5.7" ry="5.3" fill="#d52fb8"/><ellipse cx="41" cy="22" rx="5.0" ry="3.4" fill="#ec4ccf"/><ellipse cx="77" cy="62" rx="8.0" ry="5.1" fill="#f066d6"/><ellipse cx="137" cy="74" rx="7.8" ry="6.1" fill="#f486e0"/><ellipse cx="71" cy="60" rx="4.4" ry="4.3" fill="#fabcf0"/><ellipse cx="75" cy="71" rx="4.4" ry="2.9" fill="#f486e0"/><ellipse cx="75" cy="62" rx="7.1" ry="5.9" fill="#ee5ad2"/><ellipse cx="102" cy="33" rx="6.7" ry="4.4" fill="#ec4ccf"/><ellipse cx="122" cy="69" rx="4.5" ry="4.1" fill="#f486e0"/><ellipse cx="71" cy="83" rx="8.1" ry="5.6" fill="#e640c8"/><ellipse cx="40" cy="48" rx="7.8" ry="5.7" fill="#fabcf0"/><ellipse cx="127" cy="6" rx="7.7" ry="7.4" fill="#fabcf0"/><ellipse cx="126" cy="83" rx="4.7" ry="3.1" fill="#ec4ccf"/><ellipse cx="132" cy="74" rx="7.0" ry="6.4" fill="#f486e0"/><ellipse cx="34" cy="45" rx="7.6" ry="6.3" fill="#d52fb8"/><ellipse cx="106" cy="50" rx="6.4" ry="5.8" fill="#ec4ccf"/><ellipse cx="45" cy="26" rx="7.9" ry="6.3" fill="#ec4ccf"/><ellipse cx="116" cy="87" rx="6.2" ry="5.3" fill="#f7a2e8"/><ellipse cx="107" cy="43" rx="6.7" ry="5.3" fill="#f7a2e8"/><ellipse cx="108" cy="83" rx="8.7" ry="6.1" fill="#f7a2e8"/><ellipse cx="128" cy="13" rx="4.6" ry="3.6" fill="#f066d6"/></g></svg></div>
<div class="nm">Bougainvillea</div>
<div class="lb" style="top:151px">Planted</div>
<div class="vl2" style="top:171px">Jul 20, 2020</div>
<div class="lb" style="top:206px">Last Watered</div>
<div class="vl2" style="top:224.5px">Jul 20, 2020</div>
<div class="vl2" style="top:244px">water in 21 days.</div>
</div>
<div class="card" style="left:211px">
<div class="img"><svg width="161" height="95" viewBox="0 0 161 95"><rect width="161" height="95" fill="#f1efe9"/><path d="M47 95C50 70 50 40 56 6" stroke="#8a9470" stroke-width="2" fill="none"/><path d="M52.0 42.0Q37.2 20.6 12.0 14.0Q26.8 35.4 52.0 42.0z" fill="#3f4c34"/><path d="M54.0 30.0Q50.9 12.2 36.0 2.0Q39.1 19.8 54.0 30.0z" fill="#4a5a3c"/><path d="M56.0 26.0Q64.8 14.3 62.0 0.0Q53.2 11.7 56.0 26.0z" fill="#3f4c34"/><path d="M55.0 36.0Q74.5 25.9 84.0 6.0Q64.5 16.1 55.0 36.0z" fill="#4a5a3c"/><path d="M54.0 58.0Q83.4 62.7 108.0 46.0Q78.6 41.3 54.0 58.0z" fill="#3f4c34"/><path d="M56.0 66.0Q73.4 80.6 96.0 80.0Q78.6 65.4 56.0 66.0z" fill="#46553a"/><path d="M50.0 50.0Q39.2 42.1 26.0 44.0Q36.8 51.9 50.0 50.0z" fill="#55654a"/><ellipse cx="31" cy="72" rx="6" ry="8" fill="#4a4f38" transform="rotate(20 31 72)"/><path d="M121 14c7-2 15 8 17 20s-2 24-12 25-18-8-17-21 5-22 12-24z" fill="#3b3a2b"/><ellipse cx="120" cy="34" rx="5" ry="10" fill="#5a5a44" opacity=".7"/><path d="M99 66c7 0 13 10 13 19s-5 14-13 14-13-5-13-14 6-19 13-19z" fill="#7f8f3c"/><path d="M99 69c5 0 10 9 10 16s-4 11-10 11-10-4-10-11 5-16 10-16z" fill="#e2d472"/><ellipse cx="99" cy="87" rx="5" ry="6" fill="#cdbb55"/><path d="M131 64c7 0 13 10 13 20s-5 15-13 15-13-5-13-15 6-20 13-20z" fill="#7f8f3c"/><path d="M131 67c5 0 10 9 10 17s-4 12-10 12-10-4-10-12 5-17 10-17z" fill="#e2d472"/><ellipse cx="131" cy="86" rx="6" ry="7" fill="#7a4a22"/></svg></div>
<div class="nm">Avocado</div>
<div class="lb" style="top:151px">Planted</div>
<div class="vl2" style="top:171px">Jul 20, 2020</div>
<div class="lb" style="top:206px">Last Watered</div>
<div class="vl2" style="top:224.5px">Jul 20, 2020</div>
<div class="vl2" style="top:244px">water in 3 days.</div>
</div>
</div></div>
<!-- nav bar -->
<svg class="abs" style="left:1px;top:782px;width:395px;height:51px" viewBox="0 0 395 51"><path d="M90 16v18l-15-9z" fill="#f2f2f2"/><circle cx="194" cy="25" r="7.6" fill="#f2f2f2"/><rect x="299" y="17" width="16" height="16" rx="1.5" fill="#f2f2f2"/></svg>
</div>
<!-- emulator zoom controls -->
<div class="abs" style="left:1855px;top:884px;width:27.5px;height:110px;background:#37393c;border-radius:4px"></div>
<div class="abs" style="left:1855px;top:891px;width:27.5px;text-align:center;font-size:17px;line-height:20px;color:#8c8f92">+</div>
<div class="abs" style="left:1855px;top:942px;width:27.5px;text-align:center;font-size:11px;line-height:20px;color:#77797c;letter-spacing:-0.5px">1:1</div>
<div class="abs" style="left:1863px;top:976px;width:12px;height:2px;background:#4c4e51"></div>
<!-- right strip -->
<div id="rstrip">
<svg class="abs" style="left:4px;top:9px;width:12px;height:12px" viewBox="0 0 16 16"><path d="M1 12c0-5 4-8 8-7l3-2 1 2-2 2c1 2 1 4 0 5h-2c0-2-1-3-3-3s-3 1-3 3z" fill="#afb1b3"/></svg>
<div class="vr" style="top:25px;height:40px">Gradle</div>
<div class="abs" style="left:0;top:880px;width:24px;height:77.5px;background:#2b2d2e"></div>
<svg class="abs" style="left:5px;top:886px;width:10px;height:12px" viewBox="0 0 10 12"><rect x="1" y="1" width="8" height="10" rx="1" fill="none" stroke="#e0e0e0" stroke-width="1.4"/></svg>
<div class="vr" style="top:904.5px;height:50px;color:#f0f0f0;font-weight:bold">Emulator</div>
</div>
<!-- bottom strip -->
<div id="bstrip">
<svg class="abs" style="left:33px;top:5px;width:12px;height:12px" viewBox="0 0 12 12"><path d="M1 2h10M1 6h10M1 10h10" stroke="#afb1b3" stroke-width="1.6"/></svg>
<span class="bi" style="left:48.5px">TODO</span>
<svg class="abs" style="left:98px;top:5px;width:12px;height:12px" viewBox="0 0 12 12"><rect x="0.5" y="1" width="11" height="10" fill="#afb1b3"/><path d="M2.5 4l2 2-2 2" stroke="#3c3f41" stroke-width="1.3" fill="none"/></svg>
<span class="bi" style="left:115.5px">Terminal</span>
<svg class="abs" style="left:180px;top:5px;width:12px;height:12px" viewBox="0 0 12 12"><path d="M1 3l3-2 4 4-2 2zM6 6l5 5" stroke="#afb1b3" stroke-width="1.8" fill="#afb1b3"/></svg>
<span class="bi" style="left:197.5px">Build</span>
<svg class="abs" style="left:243px;top:6px;width:10px;height:10px" viewBox="0 0 10 10"><path d="M1 0v10l8-5z" fill="#afb1b3"/></svg>
<span class="bi" style="left:260px"><u>4</u>: Run</span>
<svg class="abs" style="left:1822px;top:5px;width:13px;height:13px" viewBox="0 0 13 13"><circle cx="6.5" cy="6.5" r="5" fill="none" stroke="#afb1b3" stroke-width="1.4"/></svg>
<span class="bi" style="left:1840px">Event Log</span>
</div>
<div id="status">
<div class="abs" style="left:5px;top:4px;width:12px;height:12px;border:1.5px solid #9a9da0;border-radius:2px"></div>
<span class="bi" style="left:31px">Launch succeeded (3 minutes ago)</span>
<span class="bi" style="left:1711px">69:1</span>
<span class="bi" style="left:1746px">LF</span>
<span class="bi" style="left:1770px">UTF-8</span>
<span class="bi" style="left:1815px">4 spaces</span>
<svg class="abs" style="left:1869px;top:4px;width:13px;height:13px" viewBox="0 0 13 13"><path d="M2 2l5 5M5 9l6 2-2-6" stroke="#afb1b3" stroke-width="1.6" fill="none"/></svg>
<svg class="abs" style="left:1895px;top:4px;width:13px;height:13px" viewBox="0 0 13 13"><circle cx="6.5" cy="4" r="2.5" fill="#afb1b3"/><path d="M1.5 12a5 5 0 0 1 10 0z" fill="#afb1b3"/></svg>
</div>
</div></div></div></div>
</body></html>
